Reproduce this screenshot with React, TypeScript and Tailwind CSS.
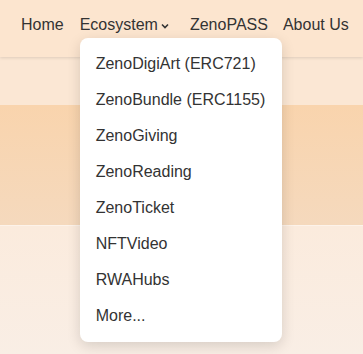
import React from "react";

const items = [
  "ZenoDigiArt (ERC721)",
  "ZenoBundle (ERC1155)",
  "ZenoGiving",
  "ZenoReading",
  "ZenoTicket",
  "NFTVideo",
  "RWAHubs",
  "More...",
];

export default function App() {
  return (
    <div
      className="relative w-[363px] h-[354px] overflow-hidden bg-[#faede1] text-[#333333]"
      style={{ fontFamily: '"Liberation Sans", Arial, sans-serif' }}
    >
      <header className="relative z-10 h-[57px] bg-[#fce5cf] shadow-[0_1px_3px_rgba(0,0,0,0.12)] flex items-start pt-[13px] pl-[21px] text-[16px] leading-[24px]">
        <span>Home</span>
        <span className="relative ml-[16px] flex items-center">
          Ecosystem
          <svg
            className="ml-[3px] mt-[1px]"
            width="8"
            height="6"
            viewBox="0 0 8 6"
            fill="none"
          >
            <path d="M1 1.5 L4 4.5 L7 1.5" stroke="#333" strokeWidth="1.6" />
          </svg>
          <div className="absolute left-0 top-[25px] w-[202px] rounded-[8px] bg-white py-[8px] shadow-[0_4px_14px_rgba(0,0,0,0.14)]">
            {items.map((t) => (
              <div key={t} className="h-[36px] flex items-center pl-[16px] text-[16px] leading-[24px] text-[#333333]">
                {t}
              </div>
            ))}
          </div>
        </span>
        <span className="ml-[21px]">ZenoPASS</span>
        <span className="ml-[15px]">About Us</span>
      </header>
      <div className="h-[48px] bg-[#fbe7d4]" />
      <div className="h-[120px] bg-gradient-to-b from-[#f9d4ad] to-[#f5d9bd]" />
      <div className="h-[1px] bg-[#fdf3ea]" />
      <div className="h-[128px] bg-gradient-to-b from-[#fbebdd] to-[#f9eee5]" />
    </div>
  );
}
